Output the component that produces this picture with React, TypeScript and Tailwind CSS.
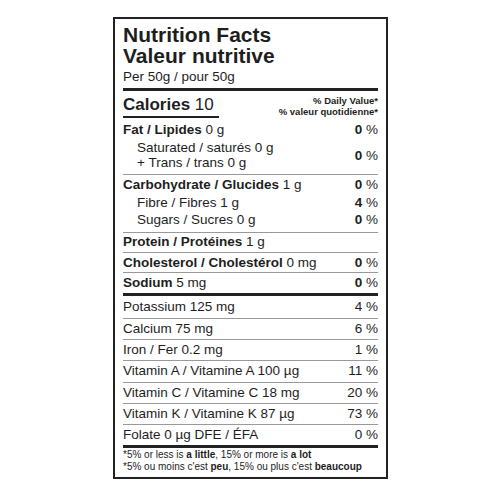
import React from 'react';

const minerals = [
  { label: 'Potassium 125 mg', dv: '4' },
  { label: 'Calcium 75 mg', dv: '6' },
  { label: 'Iron / Fer 0.2 mg', dv: '1' },
  { label: 'Vitamin A / Vitamine A 100 µg', dv: '11' },
  { label: 'Vitamin C / Vitamine C 18 mg', dv: '20' },
  { label: 'Vitamin K / Vitamine K 87 µg', dv: '73' },
  { label: 'Folate 0 µg DFE / ÉFA', dv: '0' },
];

function Pct({ v, bold = true }: { v: string; bold?: boolean }) {
  return (
    <span className="whitespace-nowrap">
      {bold ? <b>{v}</b> : v} %
    </span>
  );
}

export default function App() {
  return (
    <div className="w-[500px] h-[500px] bg-white pt-[17px] pl-[113px] text-[#1e1e1e] font-['Liberation_Sans',Arial,sans-serif]">
      <div className="w-[275px] h-[462px] border-2 border-[#222] px-2 text-[13.5px]">
        {/* Title */}
        <div className="pt-[5px]">
          <h1 className="text-[21px] leading-[21px] font-bold">
            Nutrition Facts
            <br />
            Valeur nutritive
          </h1>
          <p className="mt-[3px] leading-[16px]">Per 50g / pour 50g</p>
        </div>
        <div className="mt-[3px] h-[3px] bg-[#222]" />

        {/* Calories */}
        <div className="mt-[4px] flex items-end justify-between">
          <div className="w-[96px] border-b-2 border-[#222] pb-[2px] text-[17px] leading-[18px] whitespace-nowrap">
            <b>Calories</b> 10
          </div>
          <div className="pb-[1px] text-right text-[9.5px] leading-[11px] font-bold">
            % Daily Value*
            <br />
            % valeur quotidienne*
          </div>
        </div>

        {/* Fat */}
        <div className="pt-[3px] pb-[4px] border-b border-[#999]">
          <div className="flex justify-between leading-[17px]">
            <span>
              <b>Fat / Lipides</b> 0 g
            </span>
            <Pct v="0" />
          </div>
          <div className="mt-[2px] flex items-center justify-between leading-[15px]">
            <div className="pl-[14px]">
              Saturated / saturés 0 g
              <br />+ Trans / trans 0 g
            </div>
            <Pct v="0" />
          </div>
        </div>

        {/* Carbohydrate */}
        <div className="pt-[1px] pb-[3.5px] border-b border-[#999] leading-[17.5px]">
          <div className="flex justify-between">
            <span>
              <b>Carbohydrate / Glucides</b> 1 g
            </span>
            <Pct v="0" />
          </div>
          <div className="flex justify-between">
            <span className="pl-[14px]">Fibre / Fibres 1 g</span>
            <Pct v="4" />
          </div>
          <div className="flex justify-between">
            <span className="pl-[14px]">Sugars / Sucres 0 g</span>
            <Pct v="0" />
          </div>
        </div>

        <div className="h-[20px] border-b border-[#999] leading-[17px]">
          <b>Protein / Protéines</b> 1 g
        </div>
        <div className="h-[20px] pt-[1px] border-b border-[#999] leading-[17px] flex justify-between">
          <span>
            <b>Cholesterol / Cholestérol</b> 0 mg
          </span>
          <Pct v="0" />
        </div>
        <div className="h-[20px] pt-[1px] leading-[17px] flex justify-between">
          <span>
            <b>Sodium</b> 5 mg
          </span>
          <Pct v="0" />
        </div>
        <div className="h-[3px] bg-[#222]" />

        {/* Minerals & vitamins */}
        {minerals.map((m, i) => (
          <div
            key={m.label}
            className={
              i === 0
                ? 'h-[22px] pt-[2px] leading-[17px] flex justify-between'
                : 'h-[21.2px] pt-[1px] border-t border-[#999] leading-[17px] flex justify-between'
            }
          >
            <span>{m.label}</span>
            <Pct v={m.dv} bold={false} />
          </div>
        ))}
        <div className="h-[3px] bg-[#222]" />

        {/* Footnote */}
        <div className="pt-[1px] text-[10px] leading-[12px]">
          <p>
            *5% or less is <b>a little</b>, 15% or more is <b>a lot</b>
          </p>
          <p>
            *5% ou moins c'est <b>peu</b>, 15% ou plus c'est <b>beaucoup</b>
          </p>
        </div>
      </div>
    </div>
  );
}
